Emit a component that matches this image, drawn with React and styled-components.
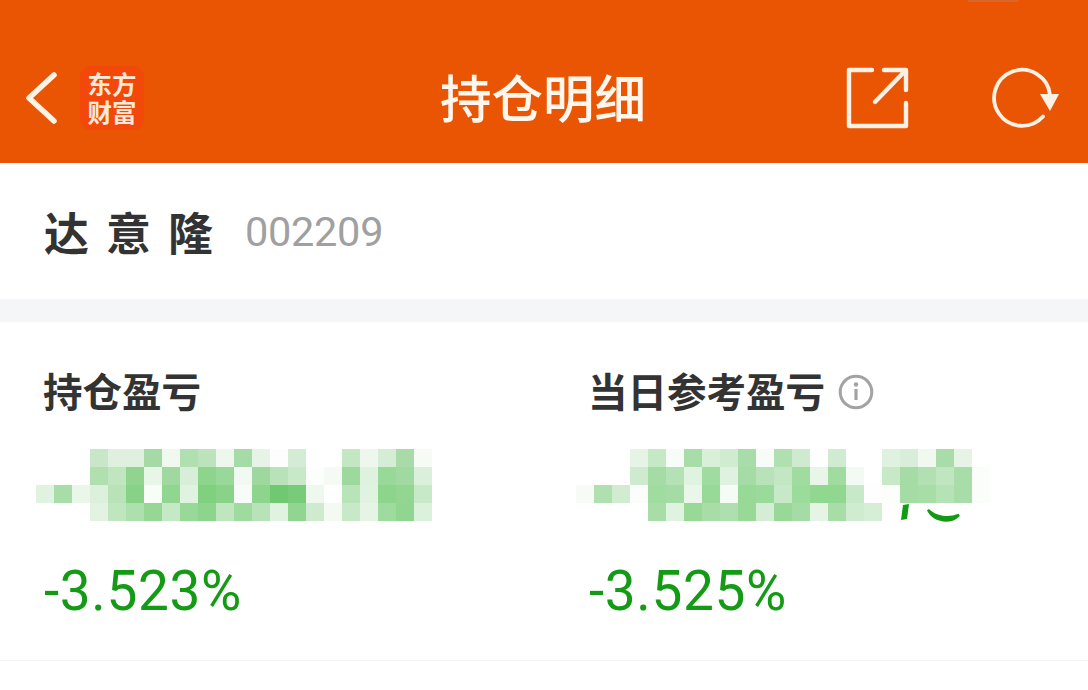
import React from "react";
import styled, { createGlobalStyle } from "styled-components";

const leftCells = [
  { x: 90, y: 449, row: "c8e6c8 dff0df dff0df a5d9a5 f0f8f0 b0dfb0 bce3bc eef7ee a5dba5 e6f3e6 fdfdfd d3ecd3 ffffff ffffff c3e7c3 eef7ee d5edd5 a8dba8 f6fbf6" },
  { x: 90, y: 467, row: "b0dfb0 c0e6c0 90d490 e8f6e8 a0d9a0 d8eed8 8dd58d 98d898 f2f9f2 9ed89e b8e2b8 c8e8c8 fcfefc f5faf5 9dd99d dff1df 98d898 a0daa0 dbf0db" },
  { x: 36, y: 485, row: "e0f2e0 a8dca8 eaf6ea dcf0dc b8e3b8 88d288 f8fdf8 90d590 e0f2e0 80d080 88d388 f8fcf8 8dd48d 70c870 78cb78 eef8ee ffffff b8e4b8 e0f2e0 8dd58d 92d692 c8e9c8" },
  { x: 90, y: 503, row: "e2f3e2 c0e6c0 aee0ae 96d796 c5e8c5 98d898 8dd48d c0e6c0 9fda9f b8e2b8 e0f2e0 90d590 cfebcf f2faf2 c8e9c8 e5f4e5 9edb9e 90d590 dcf1dc" },
];

const rightCells = [
  { x: 629, y: 449, row: "e6f4e6 c5e8c5 f8fcf8 a8dda8 d8efd8 d0ecd0 a8dca8 f8fcf8 b0e0b0 cfebcf fefefe d0ecd0 ffffff ffffff dff1df d8eed8 f0f8f0 a8dca8 e6f4e6" },
  { x: 629, y: 467, row: "cfeacf a5dca5 b5e2b5 e0f2e0 9fdc9f dff1df a5dca5 b8e3b8 c2e7c2 a0dca0 e8f5e8 a0dba0 f3faf3 ffffff c8e9c8 a5dca5 b2e0b2 c0e6c0 a8dca8 fafdfa" },
  { x: 575, y: 485, row: "f6fbf6 b0e0b0 d2ecd2 fbfdfb a0dca0 a5dca5 eaf6ea 98d998 f5fbf5 98d998 9ada9a c8e9c8 9bdb9b 90d790 90d790 c8e9c8 fdfefd fcfefc a5dca5 a8dda8 b5e3b5 a8dca8 fafdfa" },
  { x: 647, y: 503, row: "a8dda8 e0f2e0 98d998 a8dda8 aedfae 98d998 d5edd5 98d998 a5dca5 e5f4e5 a8dda8 d0ecd0 d5eed5 fdfefd ffffff" },
];

const Mosaic = ({ rows, originX, children }) => (
  <MosaicSvg width="470" height="108" viewBox={`${originX} 435 470 108`}>
    {rows.map((r) =>
      r.row.split(" ").map((c, i) => (
        <rect key={`${r.y}-${i}`} x={r.x + i * 18} y={r.y} width="18" height="18" fill={`#${c}`} />
      ))
    )}
    {children}
  </MosaicSvg>
);

const App = () => {
  return (
    <Page>
      <GlobalStyle />
      <Header>
        <HeaderLeft>
          <svg width="34" height="56" viewBox="0 0 34 56">
            <path d="M30 5 L5 28 L30 51" fill="none" stroke="#fff3e8" strokeWidth="5.5" strokeLinecap="round" strokeLinejoin="round" />
          </svg>
          <Logo>
            <span>东方</span>
            <span>财富</span>
          </Logo>
        </HeaderLeft>
        <Title>持仓明细</Title>
        <HeaderRight>
          <svg width="64" height="64" viewBox="0 0 64 64">
            <path d="M26 4H3V60H60V37M38 4H60V24M29 36L58 6" fill="none" stroke="#fdf1e6" strokeWidth="4.4" strokeLinejoin="round" strokeLinecap="round" />
          </svg>
          <svg width="72" height="66" viewBox="0 0 72 66">
            <path d="M53 51.5A28 28 0 1 1 60 30" fill="none" stroke="#fdf1e6" strokeWidth="3.8" strokeLinecap="round" />
            <path d="M50 29H69L60 46Z" fill="#fdf1e6" />
          </svg>
        </HeaderRight>
        <StatusSmear />
      </Header>

      <NameRow>
        <StockName>达意隆</StockName>
        <StockCode>002209</StockCode>
      </NameRow>

      <Divider />

      <ProfitSection>
        <ProfitColumn>
          <Label>持仓盈亏</Label>
          <Mosaic rows={leftCells} originX={28} />
          <Percent>-3.523%</Percent>
        </ProfitColumn>
        <ProfitColumn>
          <Label>
            当日参考盈亏
            <InfoIcon width="36" height="36" viewBox="0 0 36 36">
              <circle cx="18" cy="18" r="15.8" fill="none" stroke="#a3a3a3" strokeWidth="3" />
              <circle cx="18" cy="10.5" r="2.2" fill="#a3a3a3" />
              <path d="M18 15V26" stroke="#a3a3a3" strokeWidth="3.2" />
            </InfoIcon>
          </Label>
          <Mosaic rows={rightCells} originX={572}>
            <path d="M902 505L908 504L906 519L900 520Z" fill="#129a12" />
            <path d="M927 510C935 518 948 519 958 515C950 523 934 523 927 510Z" fill="#129a12" stroke="#129a12" strokeWidth="2.5" />
          </Mosaic>
          <Percent>-3.525%</Percent>
        </ProfitColumn>
      </ProfitSection>
    </Page>
  );
};

export default App;

const GlobalStyle = createGlobalStyle`
  html, body {
    margin: 0;
    padding: 0;
    background: #ffffff;
  }
`;

const Page = styled.div`
  width: 1088px;
  height: 690px;
  overflow: hidden;
  background: #ffffff;
  font-family: "Noto Sans CJK SC", "Noto Sans", sans-serif;
`;

const Header = styled.header`
  position: relative;
  height: 163px;
  box-sizing: border-box;
  padding: 32px 26px 0 24px;
  background: #ea5504;
  display: grid;
  grid-template-columns: 1fr auto 1fr;
  align-items: center;
`;

const HeaderLeft = styled.div`
  display: flex;
  align-items: center;
  gap: 22px;
`;

const HeaderRight = styled.div`
  display: flex;
  align-items: center;
  justify-content: flex-end;
  gap: 80px;
`;

const Logo = styled.div`
  width: 64px;
  height: 64px;
  border-radius: 11px;
  background: #f2480a;
  color: #fde9d8;
  font-size: 24.5px;
  font-weight: 700;
  line-height: 28px;
  display: flex;
  flex-direction: column;
  align-items: center;
  justify-content: center;
`;

const Title = styled.h1`
  margin: -4px 0 0;
  color: #fff6ee;
  font-size: 51.5px;
  font-weight: 500;
  line-height: 60px;
`;

const StatusSmear = styled.div`
  position: absolute;
  top: 0;
  left: 968px;
  width: 50px;
  height: 2px;
  background: #d9662a;
`;

const NameRow = styled.div`
  height: 136px;
  box-sizing: border-box;
  padding-left: 44px;
  display: flex;
  align-items: center;
  gap: 15px;
`;

const StockName = styled.div`
  color: #333333;
  font-size: 45px;
  font-weight: 700;
  letter-spacing: 17px;
`;

const StockCode = styled.div`
  color: #a0a0a0;
  font-family: Roboto, "Noto Sans", sans-serif;
  font-size: 41.5px;
  letter-spacing: -0.3px;
`;

const Divider = styled.div`
  height: 23px;
  background: #f5f6f8;
`;

const ProfitSection = styled.section`
  height: 339px;
  box-sizing: border-box;
  padding: 41px 0 0 43px;
  border-bottom: 1px solid #f2f2f2;
  display: grid;
  grid-template-columns: 545px 1fr;
`;

const ProfitColumn = styled.div`
  display: flex;
  flex-direction: column;
  align-items: flex-start;
`;

const Label = styled.div`
  display: flex;
  align-items: center;
  gap: 13px;
  height: 52px;
  color: #333333;
  font-size: 39.5px;
  font-weight: 700;
`;

const InfoIcon = styled.svg`
  margin-top: 6px;
`;

const MosaicSvg = styled.svg`
  display: block;
  margin: 20px 0 0 -15px;
  filter: blur(0.5px);
`;

const Percent = styled.div`
  margin: 18px 0 0 1px;
  color: #149a14;
  font-family: Roboto, "Noto Sans", sans-serif;
  font-size: 55px;
  line-height: 60px;
  letter-spacing: 0.6px;
`;
